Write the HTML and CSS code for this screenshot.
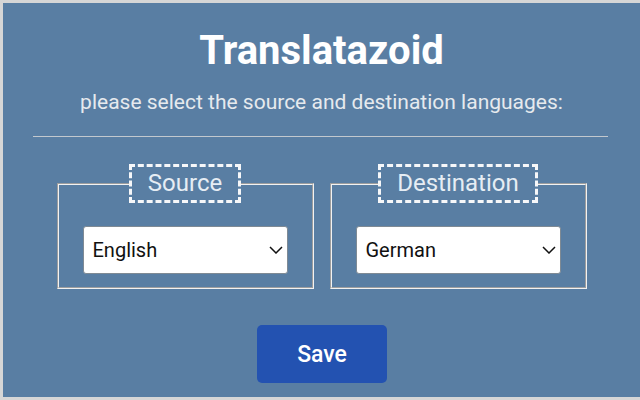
FILE: index.html
```html
<!DOCTYPE html>
<html lang="en">
<head>
<meta charset="utf-8">
<title>Translatazoid</title>
<link rel="stylesheet" href="styles.css">
</head>
<body>
<div class="panel">
  <h1 class="title">Translatazoid</h1>
  <p class="subtitle">please select the source and destination languages:</p>
  <hr class="divider">
  <div class="row">
    <fieldset class="group">
      <legend class="legend">Source</legend>
      <div class="select-wrap">
        <select class="select">
          <option>English</option>
        </select>
        <svg class="chevron" width="14" height="8" viewBox="0 0 14 8"><path d="M1 1 L7 7 L13 1" fill="none" stroke="#111" stroke-width="1.5"/></svg>
      </div>
    </fieldset>
    <fieldset class="group">
      <legend class="legend">Destination</legend>
      <div class="select-wrap">
        <select class="select">
          <option>German</option>
        </select>
        <svg class="chevron" width="14" height="8" viewBox="0 0 14 8"><path d="M1 1 L7 7 L13 1" fill="none" stroke="#111" stroke-width="1.5"/></svg>
      </div>
    </fieldset>
  </div>
  <div class="actions">
    <button class="save">Save</button>
  </div>
</div>
</body>
</html>
```
FILE: styles.css
```css
html, body {
  margin: 0;
  padding: 0;
}
body {
  background: #d6d6d6;
  width: 640px;
  height: 400px;
  overflow: hidden;
  font-family: Roboto, "Liberation Sans", sans-serif;
}
.panel {
  margin: 3px 0 0 3px;
  width: 637px;
  height: 394px;
  background: #597ea3;
  display: flex;
  flex-direction: column;
  align-items: stretch;
}
.title {
  margin: 25px 0 0;
  text-align: center;
  color: #ffffff;
  font-size: 40px;
  line-height: 46px;
  font-weight: 700;
}
.subtitle {
  margin: 16px 0 0;
  text-align: center;
  color: #e6eaee;
  font-size: 21px;
  line-height: 24px;
}
.divider {
  margin: 22px 32px 0 30px;
  height: 0;
  border: 0;
  border-top: 1.5px solid #c2c8ce;
}
.row {
  margin-top: 27px;
  display: flex;
  justify-content: center;
  gap: 16px;
}
.group {
  margin: 0;
  width: 257px;
  box-sizing: border-box;
  border: 2px groove #f2f2f2;
  padding: 23px 24px 13px;
  min-width: 0;
}
.legend {
  margin: 0 auto;
  padding: 2px 16px 3px;
  border: 3px dashed #f6f7f9;
  color: #e6edf4;
  font-size: 24px;
  line-height: 28px;
}
.select-wrap {
  position: relative;
}
.select {
  display: block;
  width: 100%;
  height: 48px;
  box-sizing: border-box;
  appearance: none;
  -webkit-appearance: none;
  background: #ffffff;
  border: 1px solid #7f8a94;
  border-radius: 3px;
  padding: 0 0 0 9px;
  font-family: Roboto, "Liberation Sans", sans-serif;
  font-size: 20px;
  color: #111111;
}
.chevron {
  position: absolute;
  right: 5px;
  top: 20px;
}
.actions {
  margin-top: 36px;
  display: flex;
  justify-content: center;
  padding-left: 1px;
}
.save {
  width: 130px;
  height: 58px;
  border: 0;
  border-radius: 5px;
  background: #2352b1;
  color: #ffffff;
  font-family: Roboto, "Liberation Sans", sans-serif;
  font-size: 23px;
  font-weight: 500;
}
```
